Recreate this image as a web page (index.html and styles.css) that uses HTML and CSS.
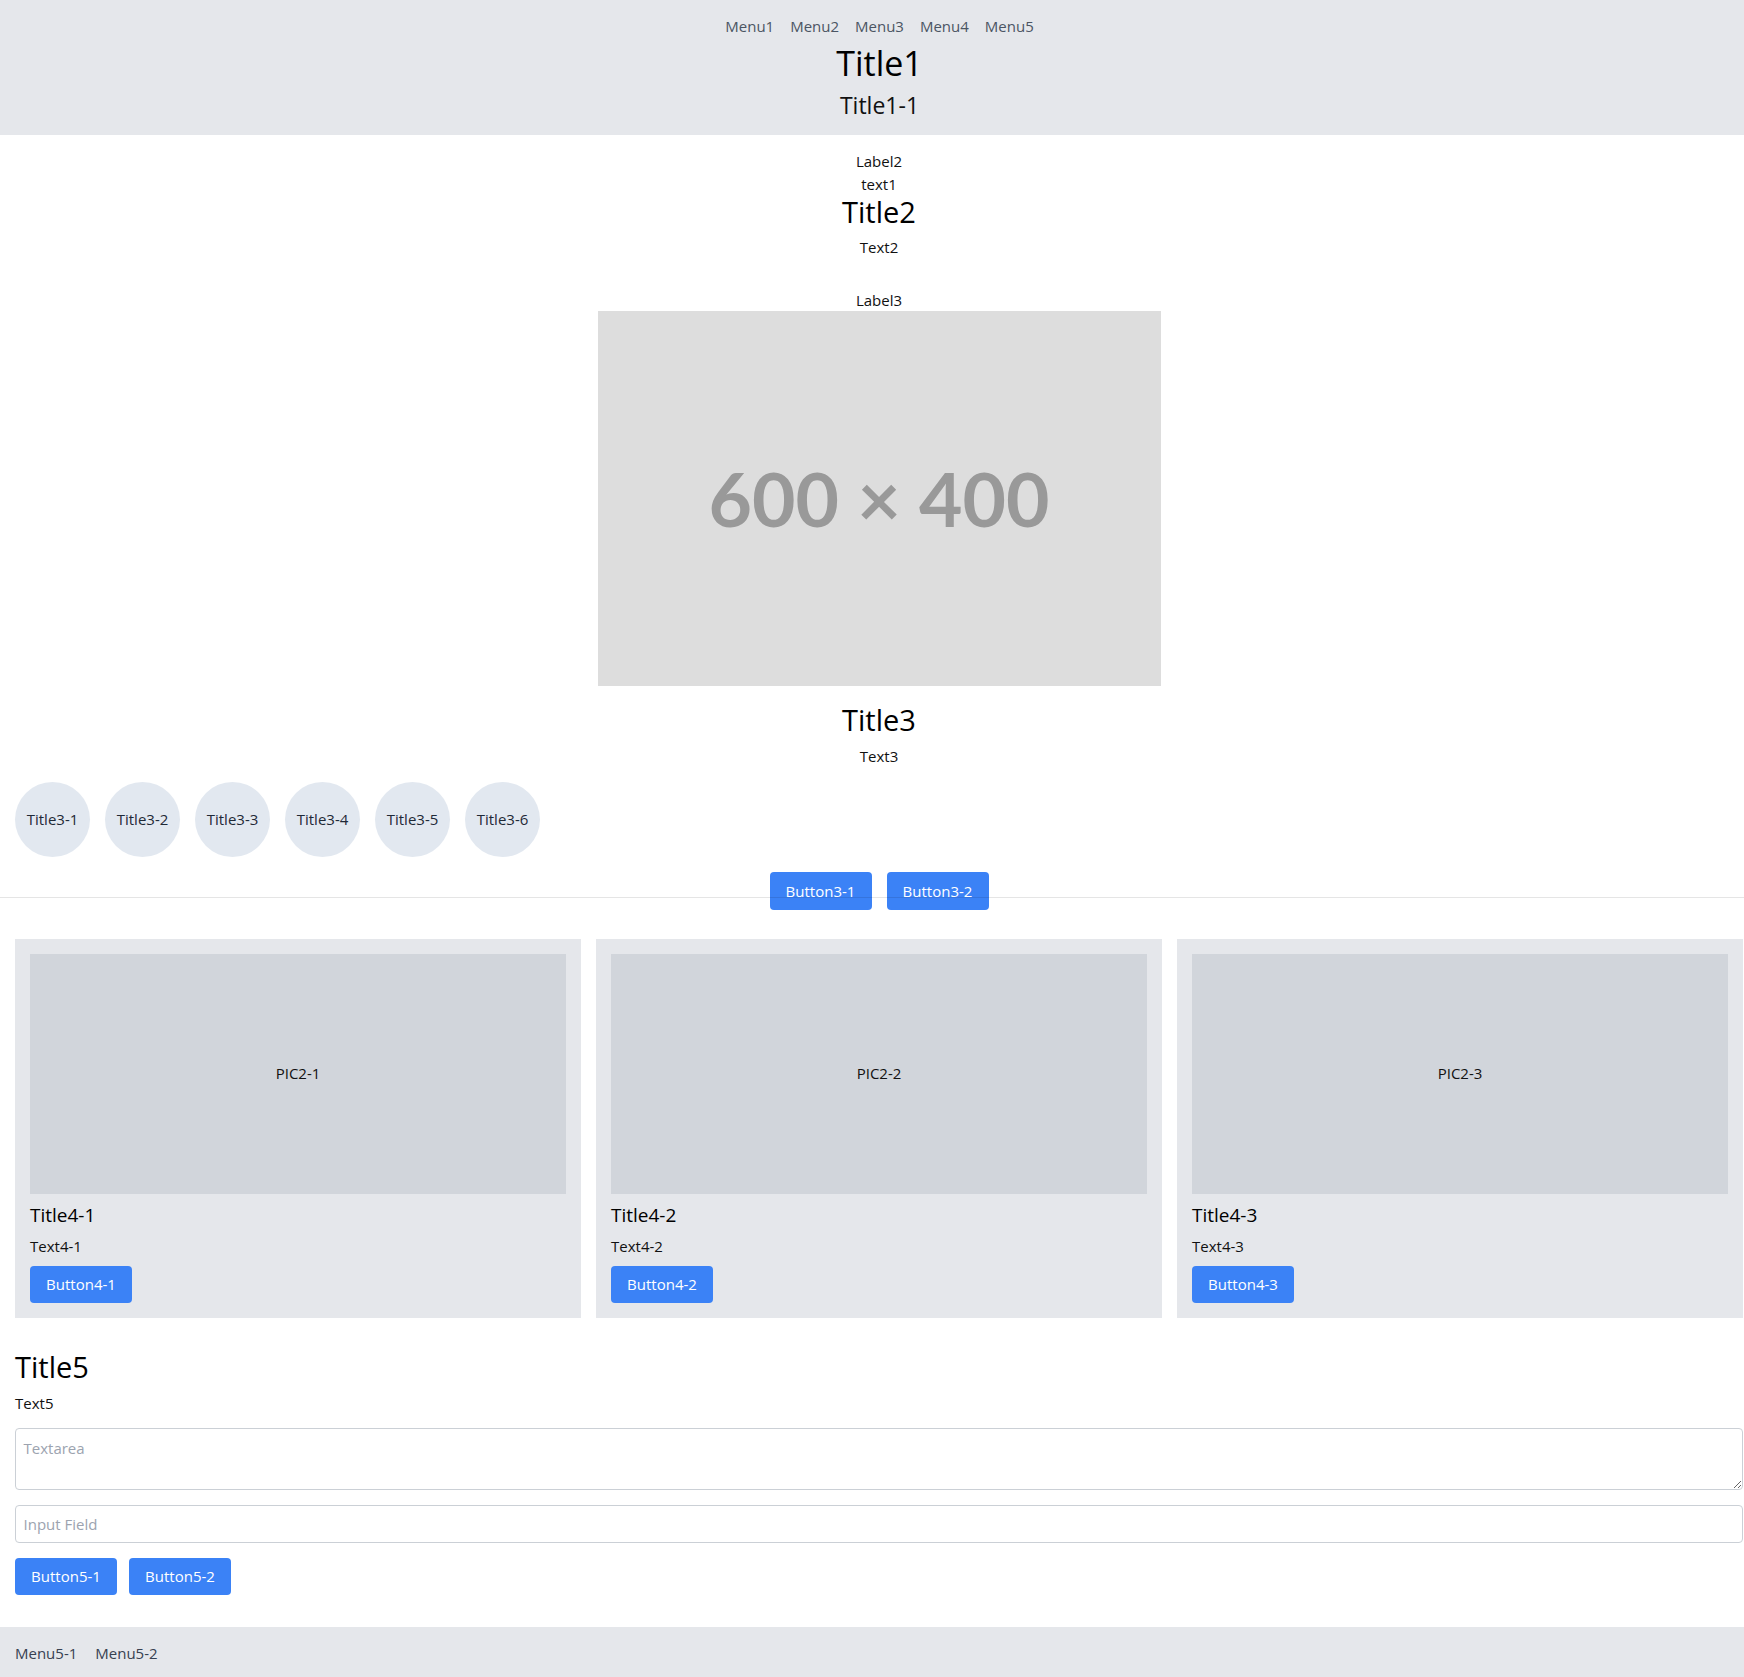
FILE: index.html
```html
<!DOCTYPE html>
<html lang="en">
<head>
<meta charset="utf-8">
<title>Page</title>
<link rel="stylesheet" href="styles.css">
</head>
<body>
<header class="site-header">
  <nav class="nav">
    <a class="nav-link" href="#">Menu1</a>
    <a class="nav-link" href="#">Menu2</a>
    <a class="nav-link" href="#">Menu3</a>
    <a class="nav-link" href="#">Menu4</a>
    <a class="nav-link" href="#">Menu5</a>
  </nav>
  <h1 class="title1">Title1</h1>
  <h2 class="title1-sub">Title1-1</h2>
</header>

<div class="wrap">
  <section class="intro">
    <div class="label">Label2</div>
    <div class="text">text1</div>
    <h2 class="title-lg">Title2</h2>
    <p class="text spaced">Text2</p>
  </section>

  <section class="feature">
    <div class="label">Label3</div>
    <div class="placeholder"><span class="placeholder-text">600 × 400</span></div>
    <h2 class="title-lg title3">Title3</h2>
    <p class="text spaced">Text3</p>
  </section>

  <div class="circles">
    <div class="circle">Title3-1</div>
    <div class="circle">Title3-2</div>
    <div class="circle">Title3-3</div>
    <div class="circle">Title3-4</div>
    <div class="circle">Title3-5</div>
    <div class="circle">Title3-6</div>
  </div>

  <div class="actions">
    <button class="btn">Button3-1</button>
    <button class="btn">Button3-2</button>
  </div>
</div>

<hr class="divider">

<div class="wrap">
  <div class="cards">
    <article class="card">
      <div class="card-pic">PIC2-1</div>
      <h3 class="card-title">Title4-1</h3>
      <p class="text spaced">Text4-1</p>
      <button class="btn card-btn">Button4-1</button>
    </article>
    <article class="card">
      <div class="card-pic">PIC2-2</div>
      <h3 class="card-title">Title4-2</h3>
      <p class="text spaced">Text4-2</p>
      <button class="btn card-btn">Button4-2</button>
    </article>
    <article class="card">
      <div class="card-pic">PIC2-3</div>
      <h3 class="card-title">Title4-3</h3>
      <p class="text spaced">Text4-3</p>
      <button class="btn card-btn">Button4-3</button>
    </article>
  </div>

  <section class="form-section">
    <h2 class="title-lg">Title5</h2>
    <p class="text spaced">Text5</p>
    <textarea class="field textarea" placeholder="Textarea"></textarea>
    <input class="field input" type="text" placeholder="Input Field">
    <div class="form-actions">
      <button class="btn">Button5-1</button>
      <button class="btn">Button5-2</button>
    </div>
  </section>
</div>

<footer class="site-footer">
  <a class="nav-link" href="#">Menu5-1</a>
  <a class="nav-link" href="#">Menu5-2</a>
</footer>
</body>
</html>
```

FILE: styles.css
```css
* { box-sizing: border-box; }

html, body {
  margin: 0;
  padding: 0;
}

body {
  font-family: "Open Sans", "Noto Sans", sans-serif;
  font-size: 15px;
  line-height: 22.5px;
  color: #111;
  background: #fff;
}

h1, h2, h3, p { margin: 0; font-weight: 400; }

.site-header {
  background: #e5e7eb;
  padding: 15px 0 15px 15px;
  text-align: center;
}

.nav {
  display: flex;
  justify-content: center;
  gap: 16px;
}

.nav-link {
  color: #4b5563;
  text-decoration: none;
  font-size: 15px;
  line-height: 22.5px;
}

.title1 {
  margin-top: 7.5px;
  font-size: 34px;
  line-height: 37.5px;
  color: #000;
}

.title1-sub {
  margin-top: 7.5px;
  font-size: 23px;
  line-height: 30px;
  color: #111;
}

.wrap {
  padding: 0 1px 0 15px;
}

.intro,
.feature {
  padding: 15px 0;
  text-align: center;
}

.label,
.text {
  font-size: 15px;
  line-height: 22.5px;
}

.spaced { margin-top: 7.5px; }

.title-lg {
  font-size: 29px;
  line-height: 33.75px;
  color: #000;
}

.placeholder {
  width: 563px;
  height: 375px;
  margin: 0 auto;
  background: #dddddd;
  display: flex;
  align-items: center;
  justify-content: center;
}

.placeholder-text {
  font-family: "Lato", "Open Sans", sans-serif;
  font-weight: 700;
  font-size: 75px;
  line-height: 1;
  color: #999999;
}

.title3 { margin-top: 17px; }

.feature { padding-bottom: 13px; }

.circles {
  display: flex;
  gap: 15px;
  margin-top: 2px;
}

.circle {
  width: 75px;
  height: 75px;
  border-radius: 50%;
  background: #e2e8f0;
  display: flex;
  align-items: center;
  justify-content: center;
  font-size: 15px;
  color: #1f2937;
}

.actions {
  display: flex;
  justify-content: center;
  gap: 15px;
  margin-top: 15px;
}

.btn {
  font-family: "Open Sans", "Noto Sans", sans-serif;
  font-size: 15px;
  line-height: 22.5px;
  padding: 7.5px 16px;
  min-width: 102px;
  border: 0;
  border-radius: 4px;
  background: #3b82f6;
  color: #fff;
  cursor: pointer;
}

.divider {
  position: relative;
  margin: -13px 0 0;
  border: 0;
  border-top: 1px solid rgba(0, 0, 0, 0.1);
  height: 0;
}

.cards {
  display: grid;
  grid-template-columns: repeat(3, 1fr);
  gap: 15px;
  margin-top: 41px;
}

.card {
  background: #e5e7eb;
  padding: 15px;
  display: flex;
  flex-direction: column;
  align-items: flex-start;
}

.card-pic {
  align-self: stretch;
  height: 240px;
  background: #d1d5db;
  display: flex;
  align-items: center;
  justify-content: center;
  font-size: 15px;
  color: #111;
}

.card-title {
  margin-top: 8px;
  font-size: 19px;
  line-height: 26.25px;
  color: #000;
}

.card-btn { margin-top: 8px; }

.form-section {
  padding: 32px 0 32px;
  display: flex;
  flex-direction: column;
}

.field {
  width: 100%;
  border: 1px solid #cbd0d6;
  border-radius: 4px;
  padding: 7.5px;
  font-family: "Open Sans", "Noto Sans", sans-serif;
  font-size: 15px;
  line-height: 22.5px;
  color: #111;
  background: #fff;
}

.field::placeholder { color: #9ca3af; }

.textarea {
  margin-top: 14px;
  height: 62px;
  display: block;
}

.input {
  margin-top: 15px;
  height: 37.5px;
}

.form-actions {
  display: flex;
  gap: 12px;
  margin-top: 15px;
}

.site-footer {
  background: #e5e7eb;
  padding: 15px;
  display: flex;
  gap: 18px;
}

.site-footer .nav-link { color: #374151; }
```
